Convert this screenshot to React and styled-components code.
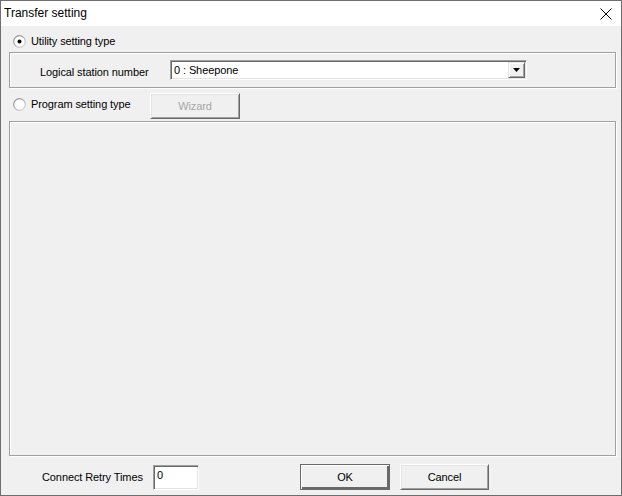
import React from 'react';
import styled, { createGlobalStyle } from 'styled-components';

const GlobalStyle = createGlobalStyle`
  html, body {
    margin: 0;
    padding: 0;
    background: #ffffff;
  }
  * {
    box-sizing: border-box;
  }
`;

const Window = styled.div`
  width: 622px;
  height: 496px;
  border: 1px solid #6e6e6e;
  display: flex;
  flex-direction: column;
  font-family: "Liberation Sans", Arial, sans-serif;
  font-size: 11px;
  letter-spacing: -0.1px;
  color: #000;
  background: #f0f0f0;
`;

const TitleBar = styled.div`
  height: 25px;
  background: #ffffff;
  display: flex;
  align-items: center;
  justify-content: space-between;
  padding-left: 3px;
`;

const Title = styled.span`
  font-size: 12px;
  letter-spacing: 0;
  margin-top: -1px;
`;

const CloseBox = styled.div`
  width: 28px;
  height: 25px;
  display: flex;
  align-items: center;
  justify-content: center;
  margin-right: 1px;
`;

const Body = styled.div`
  flex: 1;
  display: flex;
  flex-direction: column;
  padding: 7px 5px 0 8px;
`;

const Etched = styled.div`
  border: 1px solid #a0a0a0;
  box-shadow: 1px 1px 0 #ffffff, inset 1px 1px 0 #ffffff;
`;

const GroupBox = styled(Etched)`
  margin-top: 3px;
  height: 36px;
  display: flex;
  align-items: center;
`;

const Panel = styled(Etched)`
  margin-top: 2px;
  height: 335px;
`;

const RadioRow = styled.label`
  display: flex;
  align-items: center;
  gap: 5px;
  height: 16px;
  padding-left: 4px;
  width: ${({ width }) => width || 'auto'};
  margin-top: ${({ offset }) => offset || 0}px;
  flex-shrink: 0;
`;

const Row = styled.div`
  display: flex;
  align-items: ${({ align }) => align || 'center'};
  height: 26px;
  margin-top: ${({ top }) => top}px;
`;

const FieldLabel = styled.span`
  width: ${({ width }) => width}px;
  padding-left: ${({ indent }) => indent}px;
  flex-shrink: 0;
  padding-top: ${({ drop }) => drop || 0}px;
`;

const Combo = styled.div`
  width: 357px;
  height: 20px;
  display: flex;
  align-items: center;
  background: #ffffff;
  border-top: 1px solid #a0a0a0;
  border-left: 1px solid #a0a0a0;
  border-right: 1px solid #ffffff;
  border-bottom: 1px solid #ffffff;
  box-shadow: inset 1px 1px 0 #696969, inset -1px -1px 0 #e3e3e3;
  padding: 0 1px 0 3px;
`;

const ComboText = styled.span`
  flex: 1;
`;

const DropButton = styled.div`
  width: 17px;
  height: 16px;
  background: #f0f0f0;
  border-top: 1px solid #e3e3e3;
  border-left: 1px solid #e3e3e3;
  border-right: 1px solid #696969;
  border-bottom: 1px solid #696969;
  box-shadow: inset 1px 1px 0 #ffffff, inset -1px -1px 0 #a0a0a0;
  display: flex;
  align-items: center;
  justify-content: center;
`;

const Button = styled.div`
  width: ${({ width }) => width}px;
  height: 26px;
  margin-left: ${({ gap }) => gap || 0}px;
  display: flex;
  align-items: center;
  justify-content: center;
  background: #f0f0f0;
  color: ${({ disabled }) => (disabled ? '#a6a6a6' : '#000')};
  border-top: 1px solid ${({ primary }) => (primary ? '#696969' : '#ffffff')};
  border-left: 1px solid ${({ primary }) => (primary ? '#696969' : '#ffffff')};
  border-right: 1px solid #696969;
  border-bottom: 1px solid #696969;
  box-shadow: ${({ primary }) =>
    primary
      ? 'inset 1px 1px 0 #ffffff, inset -2px -2px 0 #696969'
      : 'inset 1px 1px 0 #e3e3e3, inset -1px -1px 0 #a0a0a0'};
`;

const TextBox = styled.div`
  width: 46px;
  height: 25px;
  background: #ffffff;
  border-top: 1px solid #a0a0a0;
  border-left: 1px solid #a0a0a0;
  border-right: 1px solid #ffffff;
  border-bottom: 1px solid #ffffff;
  box-shadow: inset 1px 1px 0 #696969, inset -1px -1px 0 #e3e3e3;
  padding: 3px 0 0 3px;
`;

const Radio = ({ checked }) => (
  <svg width="13" height="13" viewBox="0 0 13 13">
    <defs>
      <linearGradient id="rg" x1="0" y1="0" x2="1" y2="1">
        <stop offset="0" stopColor="#8a8a8a" />
        <stop offset="1" stopColor="#dcdcdc" />
      </linearGradient>
    </defs>
    <circle cx="6.5" cy="6.5" r="5.8" fill="#ffffff" stroke="url(#rg)" strokeWidth="1.2" />
    {checked && <circle cx="6.5" cy="6.5" r="2" fill="#000" />}
  </svg>
);

export default function App() {
  return (
    <>
      <GlobalStyle />
      <Window>
        <TitleBar>
          <Title>Transfer setting</Title>
          <CloseBox>
            <svg width="12" height="12" viewBox="0 0 12 12">
              <path d="M0.5 0.5 L11.5 11.5 M11.5 0.5 L0.5 11.5" stroke="#000" strokeWidth="1" />
            </svg>
          </CloseBox>
        </TitleBar>
        <Body>
          <RadioRow>
            <Radio checked />
            <span>Utility setting type</span>
          </RadioRow>
          <GroupBox>
            <FieldLabel width={160} indent={30} drop={3}>Logical station number</FieldLabel>
            <Combo>
              <ComboText>0 : Sheepone</ComboText>
              <DropButton>
                <svg width="7" height="4" viewBox="0 0 7 4">
                  <path d="M0 0 H7 L3.5 4 Z" fill="#000" />
                </svg>
              </DropButton>
            </Combo>
          </GroupBox>
          <Row top={5} align="flex-start">
            <RadioRow width="141px" offset={3}>
              <Radio />
              <span>Program setting type</span>
            </RadioRow>
            <Button width={90} disabled>Wizard</Button>
          </Row>
          <Panel />
          <Row top={8}>
            <FieldLabel width={144} indent={33}>Connect Retry Times</FieldLabel>
            <TextBox>0</TextBox>
            <Button width={90} gap={101} primary>OK</Button>
            <Button width={89} gap={10}>Cancel</Button>
          </Row>
        </Body>
      </Window>
    </>
  );
}
